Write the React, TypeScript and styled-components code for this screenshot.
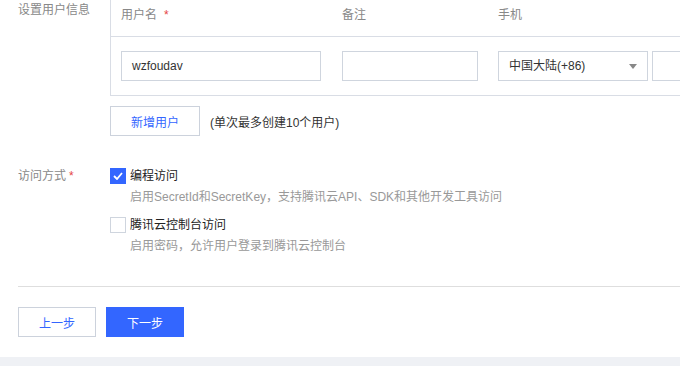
import React, { useState } from 'react';
import styled, { createGlobalStyle } from 'styled-components';

const GlobalStyle = createGlobalStyle`
  html, body {
    margin: 0;
    padding: 0;
    background: #eff1f5;
    overflow: hidden;
  }
  body {
    font-family: "Liberation Sans", Arial, "Noto Sans CJK SC", sans-serif;
    font-size: 12px;
    color: #333;
  }
`;

const Card = styled.div`
  background: #fff;
  width: 680px;
  overflow: hidden;
  padding-bottom: 20px;
  box-shadow: 0 2px 4px rgba(0, 0, 0, 0.18);
`;

const FormRow = styled.div<{ $top?: number }>`
  display: grid;
  grid-template-columns: 92px 1fr;
  padding-left: 18px;
  margin-top: ${(p) => p.$top ?? 0}px;
`;

const Label = styled.div<{ $pad?: number; $lh?: number }>`
  color: #888;
  line-height: ${(p) => p.$lh ?? 18}px;
  padding-top: ${(p) => p.$pad ?? 0}px;
`;

const Required = styled.span`
  color: #e54545;
  margin-left: 3px;
`;

const Field = styled.div`
  min-width: 0;
`;

const Table = styled.div`
  width: 700px;
  border-left: 1px solid #d9dde5;
  border-bottom: 1px solid #d9dde5;
`;

const TableRow = styled.div<{ $head?: boolean }>`
  display: grid;
  grid-template-columns: 221px 156px 1fr;
  padding: ${(p) => (p.$head ? '6px 0 12px' : '14px 0')};
  border-bottom: ${(p) => (p.$head ? '1px solid #d9dde5' : 'none')};
`;

const Cell = styled.div`
  padding: 0 10px;
  line-height: 18px;
  color: #888;
  display: flex;
  gap: 4px;
`;

const Input = styled.div<{ $w: number }>`
  box-sizing: border-box;
  width: ${(p) => p.$w}px;
  height: 30px;
  flex: none;
  border: 1px solid #cfd5de;
  padding: 0 10px;
  line-height: 28px;
  color: #333;
`;

const Select = styled(Input)`
  display: flex;
  justify-content: space-between;
  align-items: center;
`;

const Caret = styled.span`
  width: 0;
  height: 0;
  border-left: 4px solid transparent;
  border-right: 4px solid transparent;
  border-top: 5px solid #888;
`;

const AddLine = styled.div`
  display: flex;
  align-items: center;
  gap: 10px;
  margin-top: 10px;
`;

const Button = styled.button<{ $primary?: boolean; $w: number }>`
  box-sizing: border-box;
  width: ${(p) => p.$w}px;
  height: 30px;
  padding: 0;
  font: inherit;
  cursor: pointer;
  border: 1px solid ${(p) => (p.$primary ? '#3366ff' : '#ccd2dc')};
  background: ${(p) => (p.$primary ? '#3366ff' : '#fff')};
  color: ${(p) => (p.$primary ? '#fff' : '#3366ff')};
`;

const Hint = styled.span`
  color: #333;
`;

const Option = styled.div<{ $top?: number }>`
  display: grid;
  grid-template-columns: 16px auto;
  column-gap: 4px;
  row-gap: 6px;
  margin-top: ${(p) => p.$top ?? 0}px;
`;

const Box = styled.span<{ $on: boolean }>`
  box-sizing: border-box;
  width: 16px;
  height: 16px;
  border: 1px solid ${(p) => (p.$on ? '#3366ff' : '#cfd5de')};
  background: ${(p) => (p.$on ? '#3366ff' : '#fff')};
  display: flex;
  align-items: center;
  justify-content: center;
  cursor: pointer;
`;

const OptionText = styled.span`
  line-height: 16px;
  color: #222;
`;

const Desc = styled.div`
  grid-column: 2;
  line-height: 14px;
  color: #999;
`;

const Divider = styled.div`
  margin: 33px 0 0 18px;
  height: 1px;
  background: #dedede;
`;

const Footer = styled.div`
  display: flex;
  gap: 10px;
  padding-left: 18px;
  margin-top: 20px;
`;

function Check({ on, onClick }: { on: boolean; onClick: () => void }) {
  return (
    <Box $on={on} onClick={onClick}>
      {on && (
        <svg width="10" height="8" viewBox="0 0 10 8">
          <path d="M1 4 L4 7 L9 1" fill="none" stroke="#fff" strokeWidth="1.8" />
        </svg>
      )}
    </Box>
  );
}

export default function App() {
  const [api, setApi] = useState(true);
  const [consoleOn, setConsoleOn] = useState(false);

  return (
    <>
      <GlobalStyle />
      <Card>
        <FormRow>
          <Label $pad={1}>设置用户信息</Label>
          <Field>
            <Table>
              <TableRow $head>
                <Cell>用户名<Required>*</Required></Cell>
                <Cell>备注</Cell>
                <Cell>手机</Cell>
              </TableRow>
              <TableRow>
                <Cell>
                  <Input $w={200}>wzfoudav</Input>
                </Cell>
                <Cell>
                  <Input $w={136} />
                </Cell>
                <Cell>
                  <Select $w={150}>
                    中国大陆(+86)
                    <Caret />
                  </Select>
                  <Input $w={120} />
                </Cell>
              </TableRow>
            </Table>
            <AddLine>
              <Button $w={90}>新增用户</Button>
              <Hint>(单次最多创建10个用户)</Hint>
            </AddLine>
          </Field>
        </FormRow>

        <FormRow $top={32}>
          <Label $lh={16}>
            访问方式<Required>*</Required>
          </Label>
          <Field>
            <Option>
              <Check on={api} onClick={() => setApi(!api)} />
              <OptionText>编程访问</OptionText>
              <Desc>启用SecretId和SecretKey，支持腾讯云API、SDK和其他开发工具访问</Desc>
            </Option>
            <Option $top={13}>
              <Check on={consoleOn} onClick={() => setConsoleOn(!consoleOn)} />
              <OptionText>腾讯云控制台访问</OptionText>
              <Desc>启用密码，允许用户登录到腾讯云控制台</Desc>
            </Option>
          </Field>
        </FormRow>

        <Divider />
        <Footer>
          <Button $w={78}>上一步</Button>
          <Button $primary $w={78}>下一步</Button>
        </Footer>
      </Card>
    </>
  );
}
